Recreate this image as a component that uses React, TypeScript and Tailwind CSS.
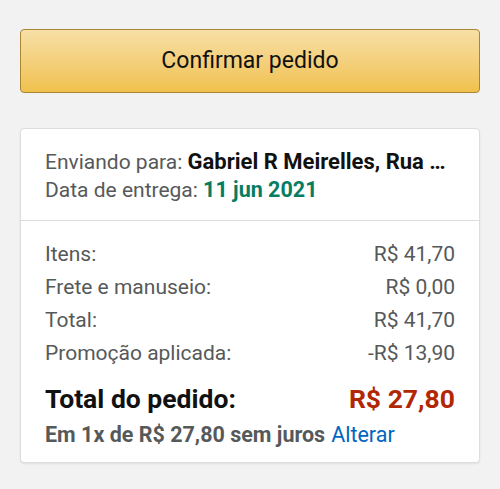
export default function App() {
  return (
    <div className="w-[500px] h-[489px] bg-[#f2f2f2] px-5 pt-[29px]" style={{ fontFamily: "Roboto, 'Noto Sans', sans-serif" }}>
      <button className="w-full h-16 rounded-[4px] border border-[#a88734] bg-gradient-to-b from-[#f7dfa5] to-[#f0c14b] text-[23px] text-[#111] flex items-center justify-center">
        Confirmar pedido
      </button>
      <div className="mt-[35px] bg-white border border-[#dddddd] rounded-[4px] shadow-[0_1px_2px_rgba(0,0,0,0.08)]">
        <div className="px-[24px] pt-[19px] pb-[16px] text-[21px] leading-[27px] text-[#565959]">
          <div className="truncate">
            Enviando para: <span className="font-bold text-[22px] text-[#111]">Gabriel R Meirelles, Rua …</span>
          </div>
          <div>
            Data de entrega: <span className="font-bold text-[21.5px] text-[#067d62]">11 jun 2021</span>
          </div>
        </div>
        <div className="border-t border-[#dddddd] px-[24px] pt-[17px] pb-[13px] text-[21px] text-[#565959]">
          <div className="flex justify-between h-[33px] items-center"><span>Itens:</span><span>R$ 41,70</span></div>
          <div className="flex justify-between h-[33px] items-center"><span>Frete e manuseio:</span><span>R$ 0,00</span></div>
          <div className="flex justify-between h-[33px] items-center"><span>Total:</span><span>R$ 41,70</span></div>
          <div className="flex justify-between h-[33px] items-center"><span>Promoção aplicada:</span><span>-R$ 13,90</span></div>
          <div className="flex justify-between items-center h-[44px] mt-[7px] text-[26.5px] font-bold">
            <span className="text-[#111]">Total do pedido:</span>
            <span className="text-[#b12704]">R$ 27,80</span>
          </div>
          <div className="h-[28px] flex items-center text-[21.5px] whitespace-nowrap">
            <span className="font-bold text-[#565959]">Em 1x de R$ 27,80 sem juros</span>
            <span className="ml-[6px] text-[#0066c0]">Alterar</span>
          </div>
        </div>
      </div>
    </div>
  );
}
